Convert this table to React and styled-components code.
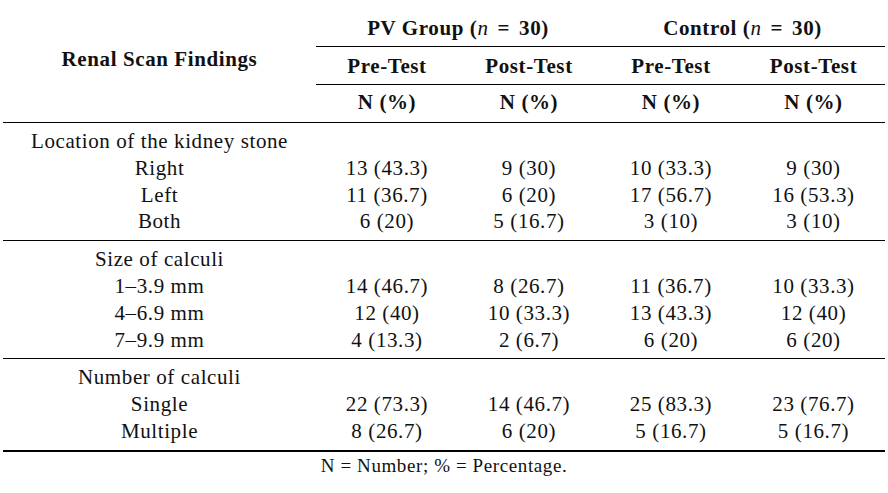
import React from 'react';
import styled, { createGlobalStyle } from 'styled-components';

const GlobalStyle = createGlobalStyle`
  html, body {
    margin: 0;
    padding: 0;
    background: #ffffff;
  }
  body {
    font-family: "Liberation Serif", "Times New Roman", serif;
    color: #111111;
  }
`;

const sections = [
  {
    label: 'Location of the kidney stone',
    rows: [
      ['Right', '13 (43.3)', '9 (30)', '10 (33.3)', '9 (30)'],
      ['Left', '11 (36.7)', '6 (20)', '17 (56.7)', '16 (53.3)'],
      ['Both', '6 (20)', '5 (16.7)', '3 (10)', '3 (10)'],
    ],
  },
  {
    label: 'Size of calculi',
    rows: [
      ['1–3.9 mm', '14 (46.7)', '8 (26.7)', '11 (36.7)', '10 (33.3)'],
      ['4–6.9 mm', '12 (40)', '10 (33.3)', '13 (43.3)', '12 (40)'],
      ['7–9.9 mm', '4 (13.3)', '2 (6.7)', '6 (20)', '6 (20)'],
    ],
  },
  {
    label: 'Number of calculi',
    rows: [
      ['Single', '22 (73.3)', '14 (46.7)', '25 (83.3)', '23 (76.7)'],
      ['Multiple', '8 (26.7)', '6 (20)', '5 (16.7)', '5 (16.7)'],
    ],
  },
];

const App = () => {
  return (
    <Page>
      <GlobalStyle />
      <Table>
        <colgroup>
          <col style={{ width: 313 }} />
          <col style={{ width: 142 }} />
          <col style={{ width: 142 }} />
          <col style={{ width: 142 }} />
          <col style={{ width: 143 }} />
        </colgroup>
        <thead>
          <tr>
            <TitleCell rowSpan={3}>Renal Scan Findings</TitleCell>
            <GroupCell colSpan={2}>
              PV Group (<Italic>n</Italic>
              <Equals>=</Equals>30)
            </GroupCell>
            <GroupCell colSpan={2}>
              Control (<Italic>n</Italic>
              <Equals>=</Equals>30)
            </GroupCell>
          </tr>
          <tr>
            <PhaseCell>Pre-Test</PhaseCell>
            <PhaseCell>Post-Test</PhaseCell>
            <PhaseCell>Pre-Test</PhaseCell>
            <PhaseCell>Post-Test</PhaseCell>
          </tr>
          <tr>
            <UnitCell>N (%)</UnitCell>
            <UnitCell>N (%)</UnitCell>
            <UnitCell>N (%)</UnitCell>
            <UnitCell>N (%)</UnitCell>
          </tr>
        </thead>
        {sections.map((section, si) => (
          <tbody key={section.label}>
            <tr>
              <LabelCell>{section.label}</LabelCell>
              <LabelCell colSpan={4} />
            </tr>
            {section.rows.map((row, ri) => (
              <tr key={row[0]}>
                {row.map((value, ci) => (
                  <DataCell
                    key={ci}
                    $end={ri === section.rows.length - 1}
                    $final={si === sections.length - 1}
                  >
                    {value}
                  </DataCell>
                ))}
              </tr>
            ))}
          </tbody>
        ))}
      </Table>
      <Footnote>N = Number; % = Percentage.</Footnote>
    </Page>
  );
};

const Page = styled.div`
  width: 888px;
  height: 493px;
  overflow: hidden;
  padding: 0 3px;
  box-sizing: border-box;
`;

const Table = styled.table`
  width: 882px;
  table-layout: fixed;
  border-collapse: separate;
  border-spacing: 0;
  font-size: 21px;
  letter-spacing: 0.6px;
`;

const HeadCell = styled.th`
  font-weight: 700;
  text-align: center;
  line-height: 24px;
  white-space: nowrap;
`;

const TitleCell = styled(HeadCell)`
  vertical-align: middle;
  padding: 0 0 5px;
  border-bottom: 1px solid #000;
`;

const GroupCell = styled(HeadCell)`
  padding: 16px 0 6px;
  border-bottom: 1px solid #000;
`;

const PhaseCell = styled(HeadCell)`
  padding: 7px 0 6px;
  border-bottom: 1px solid #000;
`;

const UnitCell = styled(HeadCell)`
  padding: 5px 0 8px;
  border-bottom: 1px solid #000;
`;

const Italic = styled.i`
  font-weight: 400;
  font-style: italic;
`;

const Equals = styled.span`
  margin: 0 9px;
`;

const LabelCell = styled.td`
  padding: 5px 0 0;
  line-height: 27px;
  text-align: center;
  white-space: nowrap;
`;

const DataCell = styled.td`
  text-align: center;
  line-height: 26.7px;
  padding: 0 0 ${(p) => (p.$end ? '5px' : '0')};
  border-bottom: ${(p) =>
    p.$end ? `${p.$final ? 2 : 1}px solid #000` : 'none'};
  white-space: nowrap;
`;

const Footnote = styled.div`
  text-align: center;
  font-size: 19px;
  letter-spacing: 0.6px;
  line-height: 24px;
  padding-top: 2px;
`;

export default App;
